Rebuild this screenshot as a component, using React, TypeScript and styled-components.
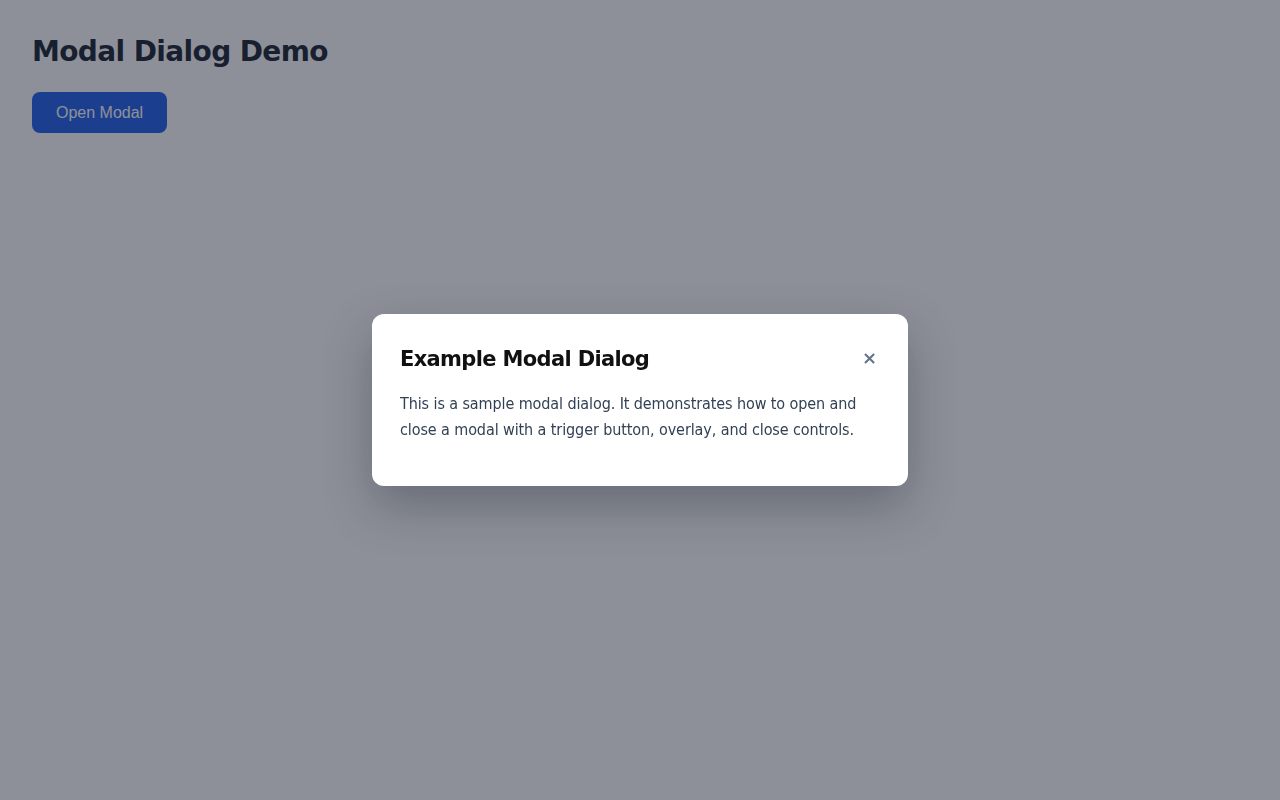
import React, { useState } from "react";
import styled, { createGlobalStyle } from "styled-components";

const Global = createGlobalStyle`
  html, body { margin: 0; padding: 0; background: #ffffff; }
  body { font-family: "DejaVu Sans Condensed", "DejaVu Sans", sans-serif; color: #1f2937; }
  * { box-sizing: border-box; }
`;

const Page = styled.main`
  padding: 32px;
  min-height: 800px;
`;

const Title = styled.h1`
  margin: 0 0 20px;
  font-family: "DejaVu Sans", sans-serif;
  font-size: 28px;
  line-height: 40px;
  letter-spacing: -0.62px;
  font-weight: 700;
  color: #1f2937;
`;

const TriggerButton = styled.button`
  font-family: "Liberation Sans", Arial, sans-serif;
  font-size: 16px;
  line-height: 19px;
  padding: 11px 24px;
  border: none;
  border-radius: 8px;
  background: #2563eb;
  color: #ffffff;
  cursor: pointer;
`;

const Overlay = styled.div`
  position: fixed;
  inset: 0;
  background: rgba(17, 24, 39, 0.48);
  display: flex;
  align-items: center;
  justify-content: center;
`;

const Dialog = styled.div`
  width: 536px;
  background: #ffffff;
  border-radius: 12px;
  padding: 28px;
  box-shadow: 0 20px 50px rgba(15, 23, 42, 0.3);
`;

const Header = styled.div`
  display: flex;
  align-items: center;
  justify-content: space-between;
  margin-bottom: 16px;
`;

const DialogTitle = styled.h2`
  margin: 0;
  padding-top: 1px;
  font-family: "DejaVu Sans", sans-serif;
  font-size: 21px;
  line-height: 32px;
  letter-spacing: -0.65px;
  font-weight: 700;
  color: #111111;
`;

const CloseButton = styled.button`
  border: none;
  background: none;
  padding: 0 3px 2px 4px;
  font-size: 18px;
  line-height: 1;
  font-weight: 700;
  color: #64748b;
  cursor: pointer;
  font-family: "DejaVu Sans", sans-serif;
`;

const Body = styled.p`
  margin: 0 0 15px;
  font-size: 16px;
  line-height: 26px;
  letter-spacing: -0.1px;
  color: #334155;
`;

export default function App() {
  const [open, setOpen] = useState(true);
  return (
    <>
      <Global />
      <Page>
        <Title>Modal Dialog Demo</Title>
        <TriggerButton onClick={() => setOpen(true)}>Open Modal</TriggerButton>
      </Page>
      {open && (
        <Overlay onClick={() => setOpen(false)}>
          <Dialog role="dialog" aria-modal="true" onClick={(e) => e.stopPropagation()}>
            <Header>
              <DialogTitle>Example Modal Dialog</DialogTitle>
              <CloseButton aria-label="Close" onClick={() => setOpen(false)}>×</CloseButton>
            </Header>
            <Body>
              This is a sample modal dialog. It demonstrates how to open and close a modal with a
              trigger button, overlay, and close controls.
            </Body>
          </Dialog>
        </Overlay>
      )}
    </>
  );
}
